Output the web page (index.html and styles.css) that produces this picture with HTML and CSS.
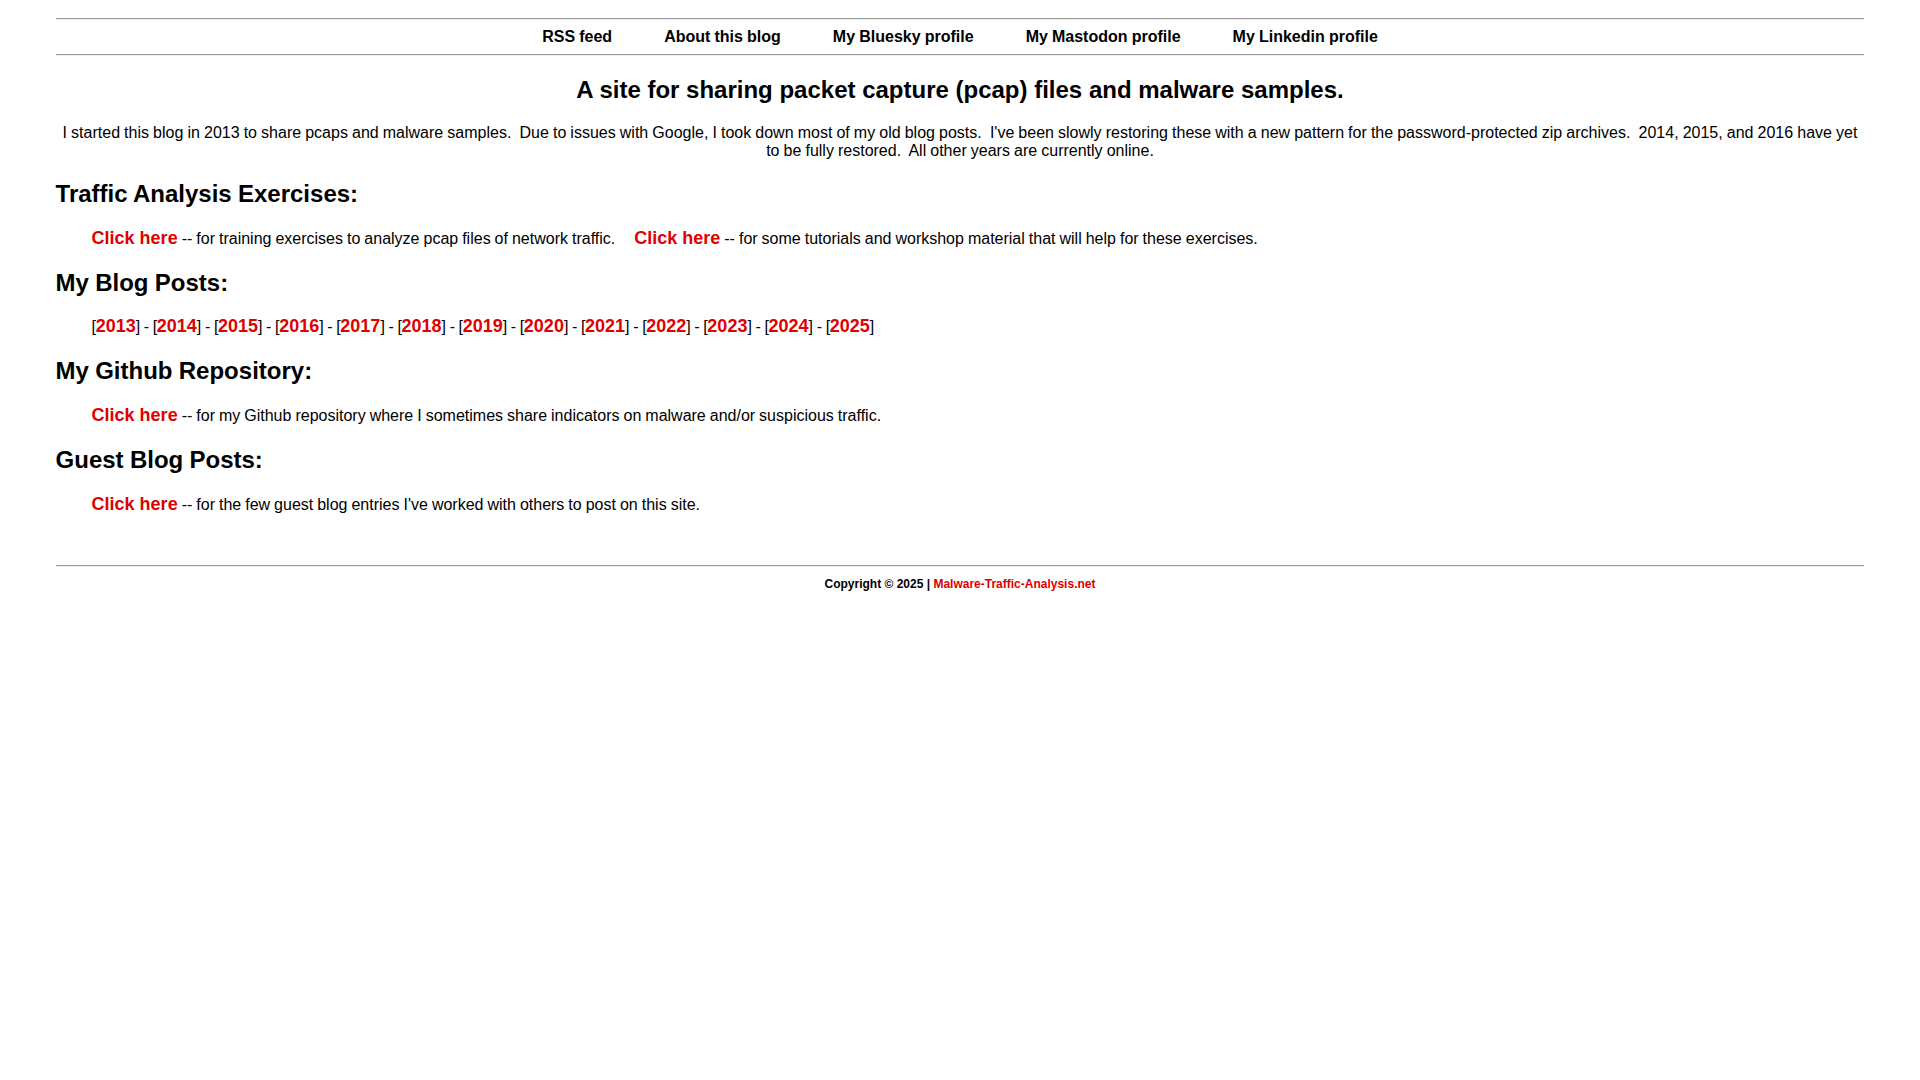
FILE: index.html
```html
<!DOCTYPE html>
<html lang="en">
<head>
<meta charset="utf-8">
<title>Malware-Traffic-Analysis.net</title>
<link rel="stylesheet" href="styles.css">
</head>
<body>
<div class="page">
  <hr class="rule rule-top">
  <nav class="nav">
    <a href="#">RSS feed</a>
    <a href="#">About this blog</a>
    <a href="#">My Bluesky profile</a>
    <a href="#">My Mastodon profile</a>
    <a href="#">My Linkedin profile</a>
  </nav>
  <hr class="rule">
  <h2 class="title">A site for sharing packet capture (pcap) files and malware samples.</h2>
  <p class="intro">I started this blog in 2013 to share pcaps and malware samples.&nbsp; Due to issues with Google, I took down most of my old blog posts.&nbsp; I've been slowly restoring these with a new pattern for the password-protected zip archives.&nbsp; 2014, 2015, and 2016 have yet to be fully restored.&nbsp; All other years are currently online.</p>

  <h2 class="section">Traffic Analysis Exercises:</h2>
  <p class="item"><a class="red" href="#">Click here</a> -- for training exercises to analyze pcap files of network traffic. <span class="sep"></span><a class="red" href="#">Click here</a> -- for some tutorials and workshop material that will help for these exercises.</p>

  <h2 class="section">My Blog Posts:</h2>
  <p class="item years">[<a class="red" href="#">2013</a>] - [<a class="red" href="#">2014</a>] - [<a class="red" href="#">2015</a>] - [<a class="red" href="#">2016</a>] - [<a class="red" href="#">2017</a>] - [<a class="red" href="#">2018</a>] - [<a class="red" href="#">2019</a>] - [<a class="red" href="#">2020</a>] - [<a class="red" href="#">2021</a>] - [<a class="red" href="#">2022</a>] - [<a class="red" href="#">2023</a>] - [<a class="red" href="#">2024</a>] - [<a class="red" href="#">2025</a>]</p>

  <h2 class="section">My Github Repository:</h2>
  <p class="item"><a class="red" href="#">Click here</a> -- for my Github repository where I sometimes share indicators on malware and/or suspicious traffic.</p>

  <h2 class="section">Guest Blog Posts:</h2>
  <p class="item"><a class="red" href="#">Click here</a> -- for the few guest blog entries I've worked with others to post on this site.</p>

  <hr class="rule rule-foot">
  <p class="copy">Copyright &copy; 2025 | <a class="copy-link" href="#">Malware-Traffic-Analysis.net</a></p>
</div>
</body>
</html>
```

FILE: styles.css
```css
html, body {
  background: #ffffff;
}

body {
  margin: 8px;
  font-family: "Liberation Sans", Arial, sans-serif;
  font-size: 16px;
  color: #000000;
}

.page {
  width: 95%;
  margin: 0 auto;
}

.rule {
  height: 0;
  margin: 0;
  border: none;
  border-top: 1px solid #9a9a9a;
  border-bottom: 1px solid #ededed;
}

.rule-top {
  margin-top: 10px;
}

.rule-foot {
  margin-top: 50px;
}

.nav {
  display: flex;
  justify-content: center;
  gap: 52px;
  padding: 8px 0 8px;
}

.nav a {
  color: #000000;
  font-weight: bold;
  text-decoration: none;
  word-spacing: -0.3px;
}

.title {
  margin: 20px 0;
  font-size: 24px;
  font-weight: bold;
  text-align: center;
}

.intro {
  margin: 0;
  text-align: center;
  word-spacing: -0.36px;
}

.section {
  margin: 20px 0;
  font-size: 24px;
  font-weight: bold;
  word-spacing: -0.4px;
}

.item {
  margin: 0;
  padding-left: 36px;
  word-spacing: -0.45px;
}

.years {
  margin-top: -1px;
  letter-spacing: -0.4px;
  word-spacing: 0;
}

.red {
  color: #e00000;
  font-size: 18px;
  font-weight: bold;
  text-decoration: none;
  word-spacing: 0;
  letter-spacing: 0;
}

.sep {
  display: inline-block;
  width: 15px;
}

.copy {
  margin: 10px 0 0;
  text-align: center;
  font-size: 12px;
  font-weight: bold;
}

.copy-link {
  color: #e00000;
  text-decoration: none;
}
```
